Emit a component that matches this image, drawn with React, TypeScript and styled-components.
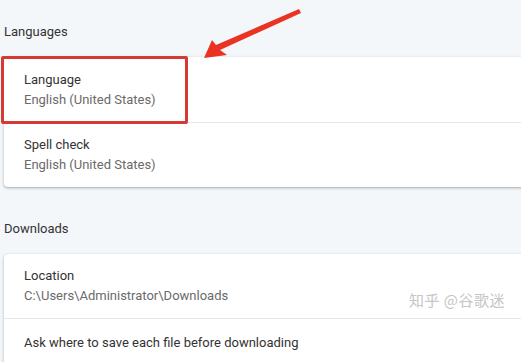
import React from "react";
import styled, { createGlobalStyle } from "styled-components";

const Global = createGlobalStyle`
  html, body { margin: 0; padding: 0; }
  body {
    background: #f4f7fa;
    font-family: Roboto, "Noto Sans", Arial, sans-serif;
    overflow: hidden;
    width: 521px;
    height: 362px;
  }
`;

const Page = styled.div`
  position: relative;
  width: 521px;
  height: 362px;
  overflow: hidden;
  padding-top: 21px;
  box-sizing: border-box;
`;

const SectionTitle = styled.div<{ $gap?: number }>`
  font-size: 13px;
  line-height: 22px;
  color: #333;
  padding-left: 4px;
  margin-bottom: 14px;
  margin-top: ${(p) => p.$gap ?? 0}px;
`;

const Card = styled.div`
  margin-left: 4px;
  margin-right: -20px;
  background: #fff;
  border-radius: 4px;
  box-shadow: 0 1px 2px rgba(60, 64, 67, 0.3), 0 1px 3px 1px rgba(60, 64, 67, 0.1);
`;

const Row = styled.div<{ $h?: number }>`
  height: ${(p) => p.$h ?? 65}px;
  padding-left: 20px;
  display: flex;
  flex-direction: column;
  justify-content: center;
  box-sizing: border-box;
  & + & {
    border-top: 1px solid #e6e6e6;
  }
`;

const Primary = styled.div`
  font-size: 13px;
  line-height: 20px;
  color: #333;
`;

const Secondary = styled.div`
  font-size: 13px;
  line-height: 20px;
  color: #6a6a6a;
`;

const Highlight = styled.div`
  position: absolute;
  left: 1px;
  top: 56px;
  width: 181px;
  height: 62px;
  border: 3px solid #d43b34;
  border-radius: 2px;
`;

const Arrow = styled.svg`
  position: absolute;
  left: 0;
  top: 0;
`;

const Watermark = styled.div`
  position: absolute;
  left: 409px;
  top: 289px;
  font-family: "Noto Sans CJK SC", sans-serif;
  font-size: 15px;
  color: #c6c6c6;
  letter-spacing: 0.5px;
`;

export default function App() {
  return (
    <>
      <Global />
      <Page>
        <SectionTitle>Languages</SectionTitle>
        <Card>
          <Row>
            <Primary>Language</Primary>
            <Secondary>English (United States)</Secondary>
          </Row>
          <Row $h={65}>
            <Primary>Spell check</Primary>
            <Secondary>English (United States)</Secondary>
          </Row>
        </Card>
        <SectionTitle $gap={31}>Downloads</SectionTitle>
        <Card>
          <Row $h={64}>
            <Primary>Location</Primary>
            <Secondary>C:\Users\Administrator\Downloads</Secondary>
          </Row>
          <Row $h={48}>
            <Primary>Ask where to save each file before downloading</Primary>
          </Row>
        </Card>
        <Highlight />
        <Arrow width="521" height="362" viewBox="0 0 521 362">
          <polygon
            points="204,58 212,40 216,45 299,9 301,13 220,50 227,55"
            fill="#ea3323"
          />
        </Arrow>
        <Watermark>知乎 @谷歌迷</Watermark>
      </Page>
    </>
  );
}
